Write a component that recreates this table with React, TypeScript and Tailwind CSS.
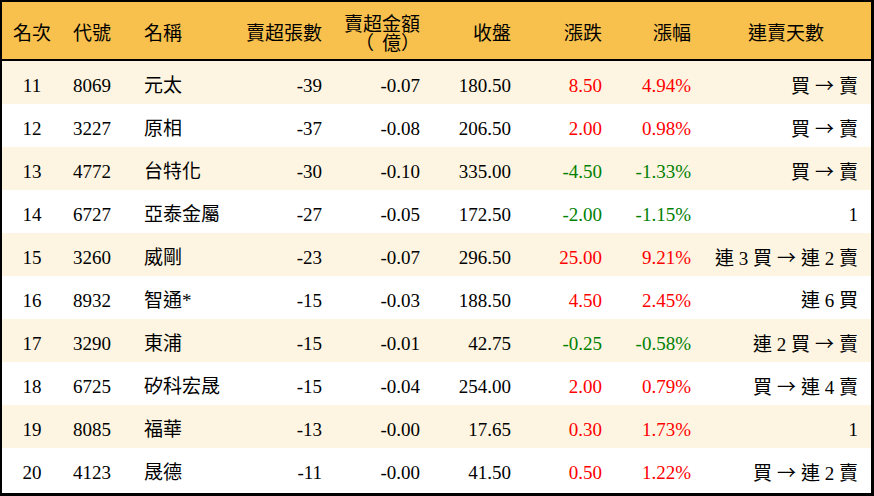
const rows = [
  { rank: 11, code: '8069', name: '元太', lots: '-39', amount: '-0.07', close: '180.50', chg: '8.50', pct: '4.94%', days: ['買', '→', '賣'] },
  { rank: 12, code: '3227', name: '原相', lots: '-37', amount: '-0.08', close: '206.50', chg: '2.00', pct: '0.98%', days: ['買', '→', '賣'] },
  { rank: 13, code: '4772', name: '台特化', lots: '-30', amount: '-0.10', close: '335.00', chg: '-4.50', pct: '-1.33%', days: ['買', '→', '賣'] },
  { rank: 14, code: '6727', name: '亞泰金屬', lots: '-27', amount: '-0.05', close: '172.50', chg: '-2.00', pct: '-1.15%', days: ['1'] },
  { rank: 15, code: '3260', name: '威剛', lots: '-23', amount: '-0.07', close: '296.50', chg: '25.00', pct: '9.21%', days: ['連 3 買', '→', '連 2 賣'] },
  { rank: 16, code: '8932', name: '智通*', lots: '-15', amount: '-0.03', close: '188.50', chg: '4.50', pct: '2.45%', days: ['連 6 買'] },
  { rank: 17, code: '3290', name: '東浦', lots: '-15', amount: '-0.01', close: '42.75', chg: '-0.25', pct: '-0.58%', days: ['連 2 買', '→', '賣'] },
  { rank: 18, code: '6725', name: '矽科宏晟', lots: '-15', amount: '-0.04', close: '254.00', chg: '2.00', pct: '0.79%', days: ['買', '→', '連 4 賣'] },
  { rank: 19, code: '8085', name: '福華', lots: '-13', amount: '-0.00', close: '17.65', chg: '0.30', pct: '1.73%', days: ['1'] },
  { rank: 20, code: '4123', name: '晟德', lots: '-11', amount: '-0.00', close: '41.50', chg: '0.50', pct: '1.22%', days: ['買', '→', '連 2 賣'] },
];

const grid = 'grid grid-cols-[60px_72px_98px_100px_98px_91px_91px_89px_1fr] items-center';

function Days({ parts }: { parts: string[] }) {
  return (
    <div className="text-right pr-[13px] whitespace-pre">
      {parts.map((p, i) =>
        p === '→' ? (
          <span key={i} className="mx-[5px]" style={{ fontFamily: '"Noto Sans CJK TC", sans-serif' }}>
            →
          </span>
        ) : (
          <span key={i}>{p}</span>
        )
      )}
    </div>
  );
}

export default function App() {
  return (
    <div
      className="w-[874px] h-[496px] bg-white border-l-2 border-t-2 border-r-[3px] border-b-[3px] border-black text-[19px] text-black overflow-hidden [text-spacing-trim:space-all]"
      style={{ fontFamily: '"Liberation Serif", "Noto Sans CJK TC", serif' }}
    >
      {/* header */}
      <div className={`${grid} h-[59px] pt-[7px] bg-[#f8c04d] border-b-2 border-black`}>
        <div className="text-center">名次</div>
        <div className="pl-[11px]">代號</div>
        <div className="pl-[10px]">名稱</div>
        <div className="text-right pr-[10px]">賣超張數</div>
        <div className="text-right pr-[10px] leading-[19px]">
          <div>賣超金額</div>
          <div>
            <span className="mr-[8px]">（</span>億）
          </div>
        </div>
        <div className="text-right pr-[10px]">收盤</div>
        <div className="text-right pr-[10px]">漲跌</div>
        <div className="text-right pr-[10px]">漲幅</div>
        <div className="text-center">連賣天數</div>
      </div>

      {rows.map((r, i) => {
        const color = r.chg.startsWith('-') ? 'text-[#008000]' : 'text-[#ff0000]';
        return (
          <div key={r.rank} className={`${grid} h-[43px] pt-[8px] ${i % 2 === 0 ? 'bg-[#fdf5e1]' : 'bg-white'}`}>
            <div className="text-center">{r.rank}</div>
            <div className="pl-[11px]">{r.code}</div>
            <div className="pl-[10px]">{r.name}</div>
            <div className="text-right pr-[10px]">{r.lots}</div>
            <div className="text-right pr-[10px]">{r.amount}</div>
            <div className="text-right pr-[10px]">{r.close}</div>
            <div className={`text-right pr-[10px] ${color}`}>{r.chg}</div>
            <div className={`text-right pr-[10px] ${color}`}>{r.pct}</div>
            <Days parts={r.days} />
          </div>
        );
      })}
    </div>
  );
}
